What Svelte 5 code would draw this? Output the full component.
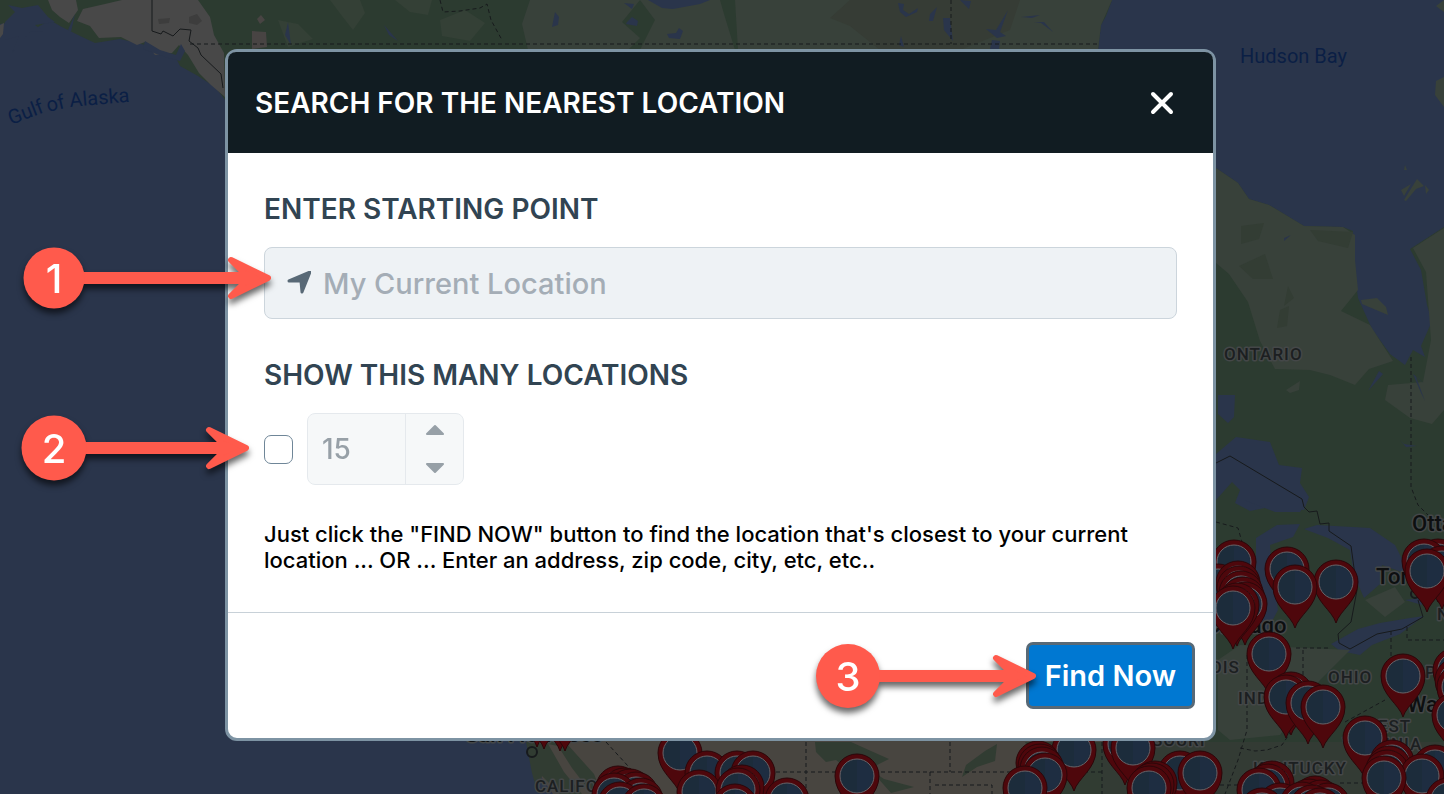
<script>
  let limited = $state(false);
  let count = $state(15);
  let start = $state('');

  // [x, y] of each pin's round head, back to front
  const pins = [
    [537, 706], [544, 708], [560, 710], [565, 710],
    [618, 788], [624, 790], [630, 791], [636, 794], [614, 795], [641, 800], [620, 804], [644, 806],
    [680, 753], [707, 773], [737, 773], [753, 773], [699, 792], [742, 787], [738, 790], [787, 800], [735, 806],
    [857, 776],
    [1074, 750], [1038, 763], [1040, 766], [1042, 769], [1045, 775], [1025, 788],
    [1125, 744], [1133, 748], [1180, 773], [1200, 773], [1155, 783], [1152, 785], [1149, 788],
    [1234, 562], [1218, 586], [1238, 583], [1239, 588], [1241, 593], [1243, 599], [1245, 604], [1237, 605], [1233, 608],
    [1287, 569], [1336, 582], [1295, 587],
    [1438, 561], [1424, 561], [1442, 568], [1427, 571],
    [1269, 654], [1291, 694], [1286, 697], [1308, 703], [1323, 707],
    [1455, 670], [1457, 680], [1459, 687], [1403, 676], [1454, 715],
    [1365, 738], [1435, 767], [1392, 762], [1389, 768], [1387, 772], [1422, 776], [1384, 778], [1448, 800],
    [1272, 783], [1268, 786], [1259, 790], [1280, 805], [1262, 810],
    [1315, 798], [1309, 801], [1321, 802], [1302, 804], [1328, 805], [1312, 807], [1320, 810]
  ];

  function step(by) {
    count = Math.max(1, count + by);
  }
</script>

{#snippet callout(number, length, radius)}
  <svg
    class="callout callout-{number}"
    width={length + 40}
    height="80"
    viewBox="0 0 {length + 40} 80"
    aria-hidden="true"
  >
    <g fill="#ff5a4c">
      <rect x="36" y="34" width={length - 24} height="12" />
      <path
        d="M{length - 3} 22 L{length + 34} 40 L{length - 3} 58 L{length + 9} 46 V34 Z"
        stroke="#ff5a4c"
        stroke-width="6"
        stroke-linejoin="round"
      />
      <circle cx="36" cy="40" r={radius} />
    </g>
    <text x="36" y="55" text-anchor="middle">{number}</text>
  </svg>
{/snippet}

<div class="page">
  <svg class="map" viewBox="0 0 1444 794" preserveAspectRatio="xMidYMid slice" aria-hidden="true">
    <defs>
      <g id="pin">
        <path
          d="M0 41 C-4 28 -22 19 -22 0 A22 22 0 0 1 22 0 C22 19 4 28 0 41 Z"
          fill="#4e070c"
          stroke="#2b0609"
        />
        <circle r="17" fill="#1c2c3b" stroke="#686469" stroke-width="1" />
        <path d="M0 -16 A16 16 0 0 1 0 16 Z" fill="#1e2d41" />
      </g>
    </defs>

    <rect width="1444" height="794" fill="#2a354b" />

    <!-- Alaska and western Canada -->
    <path fill="#2c3b30" d="M0 0 H1112 L1106 16 1101 25 1098 50 V170 H226 V101 L215 87 198 76 180 66 177 60 160 53 145 45 120 39 95 43 78 35 60 26 50 20 38 27 30 32 21 34 8 32 15 22 0 24 Z" />
    <path fill="#2a354b" d="M5 22 L15 12 8 5 22 8 38 5 48 17 55 22 35 25 43 31 30 32 12 53 19 36 5 40 Z" />
    <path fill="#484848" d="M48 0 H76 L78 10 69 23 60 17 52 10 Z M83 9 L105 4 122 0 H198 L210 17 214 35 224 53 225 97 211 85 199 73 188 55 179 45 172 53 155 55 145 42 137 45 121 37 99 38 90 26 77 21 Z M0 25 L4 23 3 34 0 38 Z" />
    <path fill="#2a354b" d="M145 41 L160 50 176 55 181 44 185 51 180 61 165 57 143 49 Z M75 14 L71 32 68 30 Z" />
    <path fill="#3d3d3d" d="M158 19 L170 18 169 23 159 24 Z M189 17 l8 -3 5 7 -5 4 -8 -2 Z" />
    <path fill="#344036" d="M330 0 H360 L365 13 353 30 342 16 Z M395 0 H432 L428 15 410 12 Z M278 20 l20 4 15 15 -25 8 Z M440 20 l25 -10 20 13 -15 18 -28 -5 Z" />
    <path fill="#38413a" d="M530 0 H720 L724 14 735 50 H640 L655 20 640 0 L622 22 640 38 628 50 H528 L522 24 Z M735 0 H1112 L1101 25 1098 50 H738 Z" />
    <path fill="#363c35" d="M850 0 H1020 L1010 30 960 50 H880 L850 26 830 18 Z" />
    <path fill="#484443" d="M252 31 l14 1 1 15 -15 2 Z M257 19 l4 -4 4 5 -5 4 Z" />
    <path fill="#2a354b" d="M288 22 l3 23 -6 -10 Z M384 25 l14 16 -9 -6 Z M648 0 H710 L700 4 673 9 662 8 Z M624 3 l10 1 -2 5 Z M627 22 l5 -5 6 4 -1 5 -11 -2 Z M555 12 l4 5 -1 8 -6 2 Z M667 34 l9 -1 3 -5 4 3 -3 8 -11 -1 Z M898 3 l6 1 -1 6 6 4 9 -6 -1 4 -11 5 -6 -5 Z M930 14 l7 -7 -4 14 -4 0 Z M943 18 l7 0 3 23 -9 -11 Z M901 36 l3 11 -5 -2 Z M960 0 l11 1 -2 8 Z M1008 10 l-8 22 6 4 -9 2 -11 -9 10 1 Z M992 40 l8 1 -1 8 h-9 Z M1021 17 l19 -2 -8 3 Z M1034 22 h10 l9 10 -12 -9 Z" />

    <!-- Ontario, Quebec and the Great Lakes -->
    <path fill="#2c3b30" d="M1216 168 L1238 183 1249 199 1269 205 1304 226 1343 227 1353 231 1353 260 1358 298 1372 329 1390 354 1405 365 1413 350 1425 357 1421 346 1432 321 1427 305 1421 270 1410 249 1444 227 V794 H1200 V168 Z" />
    <path fill="#38413a" d="M1216 168 L1238 183 1249 199 1269 205 1304 226 1343 227 1355 235 1355 260 1358 290 1341 311 1370 325 1386 350 1393 361 1369 369 1355 385 1330 375 1310 370 1275 369 1260 341 1248 302 1229 274 1216 263 Z M1413 248 L1444 228 V410 L1432 424 1410 418 1385 400 1388 385 1423 382 1431 340 1426 272 Z" />
    <path fill="#333d34" d="M1241 226 l23 -3 -5 16 -18 5 Z M1310 230 l43 2 -5 16 -30 -7 Z M1239 266 l26 -12 8 25 -20 0 Z M1288 286 l6 12 -10 8 Z M1280 310 l9 -4 -2 20 -10 2 Z" />
    <path fill="#38413a" d="M1361 300 l16 -2 9 9 2 8 -26 -11 Z M1401 190 l10 -6 -7 12 Z M1417 179 l7 7 -8 3 -10 12 -2 -1 Z M1425 185 l4 5 -3 4 Z M1405 165 l2 5 -3 0 Z M1436 81 l8 -4 V107 l-9 -12 Z M1436 6 l8 -6 v12 Z M1286 390 l14 -9 -1 9 -9 3 Z" />
    <path fill="#2a354b" d="M1218 395 l17 0 -1 22 -6 6 -10 -9 Z M1216 454 L1236 437 1270 442 1279 465 1302 468 1300 483 1309 497 1304 510 1275 506 1250 511 1235 503 1240 490 1232 482 1216 500 Z M1284 238 l7 -3 -7 6 Z M1383 374 l-15 17 11 -20 Z M1413 374 l12 10 -9 -7 9 24 -4 -8 Z M1400 440 l4 4 13 2 -11 1 Z" />
    <path fill="#2a354b" d="M1244 500 h64 l-8 12 -25 0 Z M1256 538 L1277 525 1300 524 1293 537 1270 545 1272 570 1278 610 1262 640 1256 590 Z M1317 525 L1370 528 1395 545 1410 575 1382 565 1380 584 1364 598 1354 575 1350 550 1328 538 1304 529 Z M1331 644 L1358 629 1380 623 1410 618 1424 616 1400 634 1372 645 1360 655 1340 651 Z M1405 600 l16 -2 1 7 Z" />
    <path fill="#38413a" d="M1218 660 L1240 645 1350 650 1320 680 1280 735 1230 740 1218 730 Z M1365 600 l30 -13 10 15 -20 15 Z" />

    <!-- United States, below the dialog -->
    <path fill="#484540" d="M525 735 H1110 V794 H553 L535 768 Z" />
    <path fill="#313c32" d="M526 742 l12 -3 30 6 26 29 8 20 h-42 l-18 -18 -5 15 -5 -18 Z M815 742 l36 0 20 9 18 8 -20 10 15 10 30 8 -23 6 -15 -17 -25 -4 -15 -12 -10 2 -10 -10 Z M985 751 l12 -7 -2 17 -18 6 -15 10 4 -12 Z M1025 742 h95 l20 52 H1060 l-20 -25 Z" />
    <path fill="#484540" d="M548 744 l10 2 14 22 20 26 h-10 l-18 -22 Z" />
    <path fill="#333b34" d="M1102 742 H1444 V794 H1102 Z" />

    <g fill="none" stroke="#171a1c" stroke-width="1">
      <path d="M152 0 V31 L161 34 163 31 173 36 180 29 191 30 189 41 198 48 201 55 221 74 223 88" />
      <path d="M1216 463 L1230 456 1302 499 1304 507 1309 512 1317 511 1320 524 1329 523 1329 531 1351 546 1357 590 1351 622 1338 634 1339 643 1350 649 1377 634 1402 629 1423 617 1418 600" />
      <g stroke-dasharray="4 3">
        <path d="M190 44 H1098 M440 0 L443 12 460 11 480 8 487 4 491 20 502 40 M951 0 V44 M1411 357 V487 L1418 505 1428 515 M1216 522 L1238 528 1242 542 M1296 648 H1331 M1303 650 V690 M1247 655 V730 L1238 760 1225 794 M1240 748 l15 3 12 -1 15 -5 10 -15 M1391 631 V656 M1407 627 V640 H1444 M806 742 V794 M606 742 L650 790 M776 772 H1102 M930 772 V794 M950 742 V772 M935 785 H992 V794 M1102 742 V794 M1345 722 l40 -22 M1220 785 H1244 M1340 783 H1380" />
      </g>
      <circle cx="532" cy="752" r="5" stroke-width="2" />
      <circle cx="1415" cy="594" r="4" stroke-width="2" />
    </g>

    <g class="water-name">
      <text transform="translate(11 125) rotate(-21)">Gulf</text>
      <text transform="translate(48 112) rotate(-13)">of</text>
      <text transform="translate(70 107) rotate(-5)">Alaska</text>
      <text x="1240" y="63">Hudson Bay</text>
    </g>
    <g class="region-name">
      <text x="1224" y="360">ONTARIO</text>
      <text x="1210" y="673">OIS</text>
      <text x="1238" y="704">INDIANA</text>
      <text x="1328" y="683">OHIO</text>
      <text x="1253" y="774">KENTUCKY</text>
      <text x="1362" y="732">WEST</text>
      <text x="1343" y="750">VIRGINIA</text>
      <text x="1425" y="678">PENN</text>
      <text x="1437" y="620">NEW</text>
      <text x="1119" y="746">MISSOURI</text>
      <text x="535" y="792">CALIFORNIA</text>
    </g>
    <g class="city-name">
      <text x="1412" y="531">Ottawa</text>
      <text x="1376" y="584">Toronto</text>
      <text x="1206" y="633">Chicago</text>
      <text x="1407" y="712">Washington</text>
      <text x="465" y="742">San Francisco</text>
    </g>

    {#each pins as [x, y]}
      <use href="#pin" {x} {y} />
    {/each}
  </svg>

  <div class="dialog" role="dialog" aria-modal="true" aria-labelledby="title">
    <header>
      <h1 id="title">SEARCH FOR THE NEAREST LOCATION</h1>
      <button class="close" type="button" aria-label="Close">
        <svg width="24" height="24" viewBox="0 0 24 24">
          <path d="M3 3 L21 21 M21 3 L3 21" stroke="#fff" stroke-width="4" stroke-linecap="round" />
        </svg>
      </button>
    </header>

    <div class="body">
      <label class="heading" for="start">ENTER STARTING POINT</label>
      <div class="start">
        <svg class="arrow" width="24" height="24" viewBox="0 0 24 24" aria-hidden="true">
          <path
            d="M23 1 L15 21 L14 10 L2 10 Z"
            fill="#586976"
            stroke="#586976"
            stroke-width="3"
            stroke-linejoin="round"
          />
        </svg>
        <input id="start" type="text" placeholder="My Current Location" bind:value={start} />
        {@render callout(1, 216, 30.5)}
      </div>

      <label class="heading" for="limit">SHOW THIS MANY LOCATIONS</label>
      <div class="amount">
        <input id="limit" class="limit" type="checkbox" bind:checked={limited} />
        <div class="spinner" class:off={!limited}>
          <input type="text" inputmode="numeric" aria-label="Number of locations" bind:value={count} disabled={!limited} />
          <div class="steps">
            <button type="button" aria-label="More" disabled={!limited} onclick={() => step(1)}>
              <svg width="20" height="12" viewBox="0 0 20 12">
                <path d="M2 10 L10 2 L18 10 Z" />
              </svg>
            </button>
            <button type="button" aria-label="Fewer" disabled={!limited} onclick={() => step(-1)}>
              <svg width="20" height="12" viewBox="0 0 20 12">
                <path d="M2 2 L10 10 L18 2 Z" />
              </svg>
            </button>
          </div>
        </div>
        {@render callout(2, 194, 32.5)}
      </div>

      <p>
        Just click the "FIND NOW" button to find the location that's closest to your current
        location ... OR ... Enter an address, zip code, city, etc, etc..
      </p>
    </div>

    <footer>
      <div class="submit">
        <button class="find" type="button">Find Now</button>
        {@render callout(3, 187, 32)}
      </div>
    </footer>
  </div>
</div>

<style>
  :global(body) {
    background: #2a354b;
  }

  .page {
    position: relative;
    box-sizing: border-box;
    min-height: 100vh;
    padding: 49px 228px 53px 225px;
    overflow: hidden;
    font-family: Inter, "Liberation Sans", sans-serif;
  }

  .map {
    position: absolute;
    inset: 0;
    width: 100%;
    height: 100%;
  }

  .map text {
    font-family: Roboto, sans-serif;
    paint-order: stroke;
    stroke-linejoin: round;
  }

  .water-name {
    font-size: 20px;
    fill: #0b1f45;
  }

  .region-name {
    font-size: 17px;
    font-weight: 500;
    letter-spacing: 1px;
    fill: #1c1f21;
    stroke: #444748;
    stroke-width: 3px;
  }

  .city-name {
    font-size: 22px;
    font-weight: 500;
    fill: #0d0f10;
    stroke: #444748;
    stroke-width: 3px;
  }

  .dialog {
    position: relative;
    border: 3px solid #7d93a3;
    border-radius: 12px;
    background: #fff;
  }

  header {
    display: flex;
    align-items: center;
    justify-content: space-between;
    height: 101px;
    padding: 0 39px 0 27px;
    border-radius: 8px 8px 0 0;
    background: #111c22;
  }

  h1 {
    margin: 0;
    font-size: 28px;
    font-weight: 600;
    color: #fff;
  }

  button {
    padding: 0;
    border: 0;
    background: none;
    font: inherit;
    cursor: pointer;
  }

  .close,
  .close svg {
    display: block;
  }

  .body {
    padding: 39px 36px;
  }

  .heading {
    display: block;
    width: fit-content;
    font-size: 28px;
    line-height: 34px;
    font-weight: 600;
    color: #314452;
  }

  .start {
    position: relative;
    display: flex;
    align-items: center;
    gap: 12px;
    box-sizing: border-box;
    height: 72px;
    margin: 21px 0 39px;
    padding: 0 22px;
    border: 1px solid #ccd5dc;
    border-radius: 8px;
    background: #eef2f5;
  }

  .start input {
    flex: 1;
    min-width: 0;
    padding: 0;
    border: 0;
    outline: 0;
    background: none;
    font: 500 29px Inter, sans-serif;
    color: #314452;
  }

  .start input::placeholder {
    color: #a4adb6;
    opacity: 1;
  }

  .amount {
    position: relative;
    display: flex;
    align-items: center;
    gap: 14px;
    margin: 21px 0 36px;
  }

  .limit {
    appearance: none;
    width: 29px;
    height: 29px;
    margin: 0;
    border: 1px solid #6f8698;
    border-radius: 7px;
    background: #fff;
  }

  .limit:checked {
    background: #0078d2;
  }

  .spinner {
    display: flex;
    box-sizing: border-box;
    height: 72px;
    border: 1px solid #ccd5dc;
    border-radius: 8px;
    background: #eef2f5;
  }

  .spinner.off {
    opacity: 0.5;
  }

  .spinner input {
    box-sizing: border-box;
    width: 97px;
    padding: 0 14px;
    border: 0;
    background: none;
    font: 500 28px Inter, sans-serif;
    color: #314452;
  }

  .steps {
    display: flex;
    flex-direction: column;
    align-items: center;
    justify-content: center;
    gap: 26px;
    width: 57px;
    border-left: 1px solid #ccd5dc;
  }

  .steps svg {
    display: block;
  }

  .steps path {
    fill: #314452;
    stroke: #314452;
    stroke-width: 2px;
    stroke-linejoin: round;
  }

  p {
    margin: 0;
    font-size: 22px;
    line-height: 26px;
    font-weight: 500;
    color: #000;
  }

  footer {
    display: flex;
    justify-content: flex-end;
    padding: 29px 18px;
    border-top: 1px solid #c8d1d8;
  }

  .submit {
    position: relative;
  }

  .find {
    display: block;
    height: 67px;
    padding: 0 16px;
    border: 3px solid #586976;
    border-radius: 7px;
    background: #0078d2;
    font-size: 29px;
    font-weight: 600;
    color: #fff;
  }

  .callout {
    position: absolute;
    top: -10px;
    pointer-events: none;
    filter: drop-shadow(0 5px 3px rgba(0, 0, 0, 0.6));
  }

  .callout text {
    font: 500 40px Inter, sans-serif;
    fill: #fff;
  }

  .callout-1 {
    left: -247px;
  }

  .callout-2 {
    top: -5px;
    left: -246px;
  }

  .callout-3 {
    top: -6px;
    left: -214px;
  }
</style>
